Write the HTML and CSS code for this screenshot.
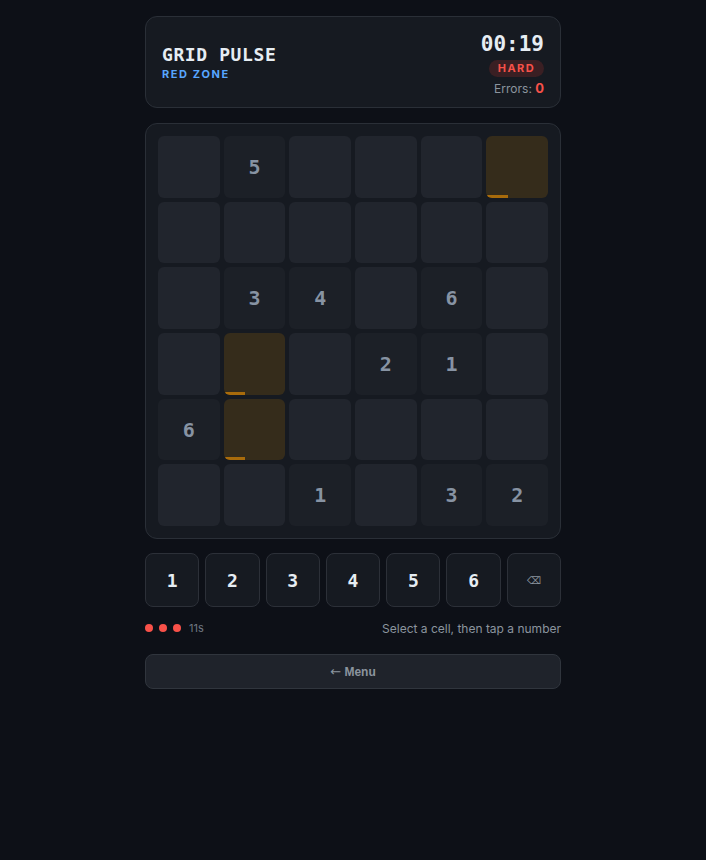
FILE: index.html
```html
<!DOCTYPE html>
<html lang="en">
<head>
<meta charset="utf-8">
<title>Grid Pulse</title>
<link rel="stylesheet" href="styles.css">
</head>
<body>
<main class="app">
  <header class="card header">
    <div class="brand">
      <div class="title">GRID PULSE</div>
      <div class="subtitle">RED ZONE</div>
    </div>
    <div class="meta">
      <div class="timer">00:19</div>
      <div class="badge">HARD</div>
      <div class="errors">Errors: <span class="err-count">0</span></div>
    </div>
  </header>

  <section class="card board">
    <div class="grid">
      <div class="cell"></div>
      <div class="cell given">5</div>
      <div class="cell"></div>
      <div class="cell"></div>
      <div class="cell"></div>
      <div class="cell pulse"><span class="bar"></span></div>

      <div class="cell"></div>
      <div class="cell"></div>
      <div class="cell"></div>
      <div class="cell"></div>
      <div class="cell"></div>
      <div class="cell"></div>

      <div class="cell"></div>
      <div class="cell given">3</div>
      <div class="cell given">4</div>
      <div class="cell"></div>
      <div class="cell given">6</div>
      <div class="cell"></div>

      <div class="cell"></div>
      <div class="cell pulse"><span class="bar"></span></div>
      <div class="cell"></div>
      <div class="cell given">2</div>
      <div class="cell given">1</div>
      <div class="cell"></div>

      <div class="cell given">6</div>
      <div class="cell pulse"><span class="bar"></span></div>
      <div class="cell"></div>
      <div class="cell"></div>
      <div class="cell"></div>
      <div class="cell"></div>

      <div class="cell"></div>
      <div class="cell"></div>
      <div class="cell given">1</div>
      <div class="cell"></div>
      <div class="cell given">3</div>
      <div class="cell given">2</div>
    </div>
  </section>

  <section class="pad">
    <button class="key">1</button>
    <button class="key">2</button>
    <button class="key">3</button>
    <button class="key">4</button>
    <button class="key">5</button>
    <button class="key">6</button>
    <button class="key erase">&#x232B;</button>
  </section>

  <div class="status">
    <div class="lives">
      <span class="dot"></span><span class="dot"></span><span class="dot"></span>
      <span class="secs">11s</span>
    </div>
    <div class="hint">Select a cell, then tap a number</div>
  </div>

  <button class="menu"><span class="arrow">&larr;</span> Menu</button>
</main>
</body>
</html>
```

FILE: styles.css
```css
* { box-sizing: border-box; }

html, body {
  margin: 0;
  background: #0d1017;
}

body {
  font-family: Inter, "Liberation Sans", sans-serif;
  color: #e6edf3;
}

.app {
  width: 416px;
  margin: 0 auto;
  padding-top: 16px;
  display: flex;
  flex-direction: column;
}

.card {
  background: #161a21;
  border: 1px solid #2a2f37;
  border-radius: 12px;
}

.header {
  height: 92px;
  padding: 0 16px;
  display: flex;
  justify-content: space-between;
  align-items: center;
}

.title {
  font-family: "DejaVu Sans Mono", monospace;
  font-weight: bold;
  font-size: 18px;
  letter-spacing: 0.6px;
  color: #e6edf3;
  line-height: 22px;
}

.subtitle {
  margin-top: 1px;
  font-size: 11px;
  font-weight: 700;
  letter-spacing: 1.6px;
  color: #58a6ff;
  line-height: 14px;
}

.meta {
  display: flex;
  flex-direction: column;
  align-items: flex-end;
  padding-top: 3px;
}

.timer {
  font-family: "DejaVu Sans Mono", monospace;
  font-weight: bold;
  font-size: 21px;
  line-height: 26px;
  color: #e6edf3;
}

.badge {
  margin-top: 3px;
  height: 17px;
  padding: 0 9px;
  border-radius: 9px;
  background: #3a1f23;
  color: #f85149;
  font-size: 11px;
  font-weight: 700;
  letter-spacing: 1.4px;
  line-height: 17px;
}

.errors {
  margin-top: 3px;
  font-size: 12px;
  line-height: 16px;
  color: #8b949e;
}

.err-count {
  color: #f85149;
  font-weight: 700;
  font-size: 13px;
}

.board {
  margin-top: 15px;
  padding: 12px;
}

.grid {
  display: grid;
  grid-template-columns: repeat(6, 1fr);
  gap: 4px;
}

.cell {
  position: relative;
  aspect-ratio: 1 / 1;
  border-radius: 6px;
  background: #21252d;
  overflow: hidden;
  display: flex;
  align-items: center;
  justify-content: center;
  font-family: "DejaVu Sans Mono", monospace;
  font-weight: bold;
  font-size: 20px;
  color: #8793a3;
}

.cell.given {
  background: #1c2027;
}

.cell.pulse {
  background: #352c1b;
}

.bar {
  position: absolute;
  left: 0;
  bottom: 0;
  width: 35%;
  height: 3px;
  background: #a86b0b;
}

.pad {
  margin-top: 14px;
  display: grid;
  grid-template-columns: repeat(7, 1fr);
  gap: 6px;
}

.key {
  aspect-ratio: 1 / 1;
  background: #161a21;
  border: 1px solid #2c3038;
  border-radius: 8px;
  color: #e6edf3;
  font-family: "DejaVu Sans Mono", monospace;
  font-weight: bold;
  font-size: 18px;
  padding: 0;
}

.key.erase {
  font-family: "DejaVu Sans", sans-serif;
  font-size: 10px;
  font-weight: normal;
  color: #8b949e;
}

.status {
  margin-top: 13px;
  display: flex;
  justify-content: space-between;
  align-items: center;
  height: 16px;
}

.lives {
  display: flex;
  align-items: center;
  gap: 6px;
}

.dot {
  width: 8px;
  height: 8px;
  border-radius: 50%;
  background: #f85149;
}

.secs {
  margin-left: 2px;
  font-size: 11px;
  color: #6e7681;
}

.hint {
  font-size: 12px;
  color: #8b949e;
}

.menu {
  margin-top: 18px;
  height: 35px;
  background: #1f232b;
  border: 1px solid #30353d;
  border-radius: 8px;
  color: #8b949e;
  font-family: "Liberation Sans", Arial, sans-serif;
  font-weight: bold;
  font-size: 12px;
}

.arrow {
  font-family: "DejaVu Sans", sans-serif;
  font-weight: normal;
  font-size: 13px;
}
```
